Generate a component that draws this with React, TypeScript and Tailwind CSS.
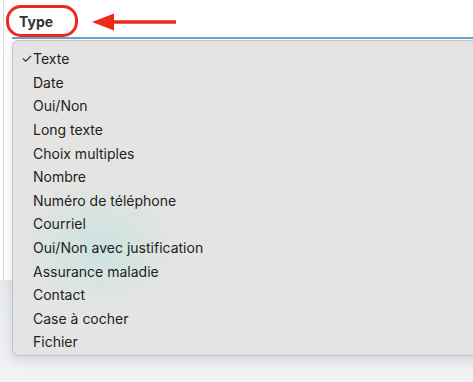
import React from "react";

const items = [
  "Texte",
  "Date",
  "Oui/Non",
  "Long texte",
  "Choix multiples",
  "Nombre",
  "Numéro de téléphone",
  "Courriel",
  "Oui/Non avec justification",
  "Assurance maladie",
  "Contact",
  "Case à cocher",
  "Fichier",
];

export default function App() {
  return (
    <div
      className="w-[473px] h-[382px] overflow-hidden bg-white flex flex-col"
      style={{ fontFamily: "Inter, 'Liberation Sans', sans-serif" }}
    >
      {/* card area */}
      <div className="h-[280px] ml-[3px] border-l border-[#dcdcdc] flex flex-col relative">
        {/* label row with annotation */}
        <div className="flex items-start h-[37px] pt-[5px] pl-[2px]">
          <div className="h-[32px] w-[72px] rounded-[15px] border-[3px] border-[#ee2a1c] flex items-center pl-[10px] text-[14px] font-bold text-[#333]">
            Type
          </div>
          <svg className="ml-[14px] mt-[8px]" width="86" height="20" viewBox="0 0 86 20">
            <line x1="18" y1="9" x2="84" y2="9" stroke="#ee2a1c" strokeWidth="3.5" />
            <polygon points="0,9 22,0.5 22,17.5" fill="#ee2a1c" />
          </svg>
        </div>
        {/* input edge */}
        <div className="ml-[8px] h-[2px] bg-[#6aa3d0]" />

        {/* Dropdown menu overlay */}
        <div className="absolute left-[8px] top-[40px] w-[480px] h-[316px] rounded-[6px] border border-[#c3c3c3] bg-[#e5e4e2] shadow-[0_4px_12px_rgba(0,0,0,0.12)] overflow-hidden z-10">
          <div className="absolute left-[0px] top-[140px] w-[170px] h-[130px] rounded-full bg-[radial-gradient(closest-side,rgba(185,226,222,0.6),rgba(229,228,226,0))]" />
          <div className="relative flex flex-col pt-[6px]">
            {items.map((it, i) => (
              <div key={it} className="flex items-center h-[23.6px] text-[14px] text-[#222]">
                <span className="w-[20px] pl-[8px] text-[13px]">{i === 0 ? "✓" : ""}</span>
                <span>{it}</span>
              </div>
            ))}
          </div>
        </div>
      </div>
      {/* page background lower area */}
      <div className="flex-1 bg-gradient-to-b from-[#e6e9ee] to-[#f1f3f6]" />
    </div>
  );
}
